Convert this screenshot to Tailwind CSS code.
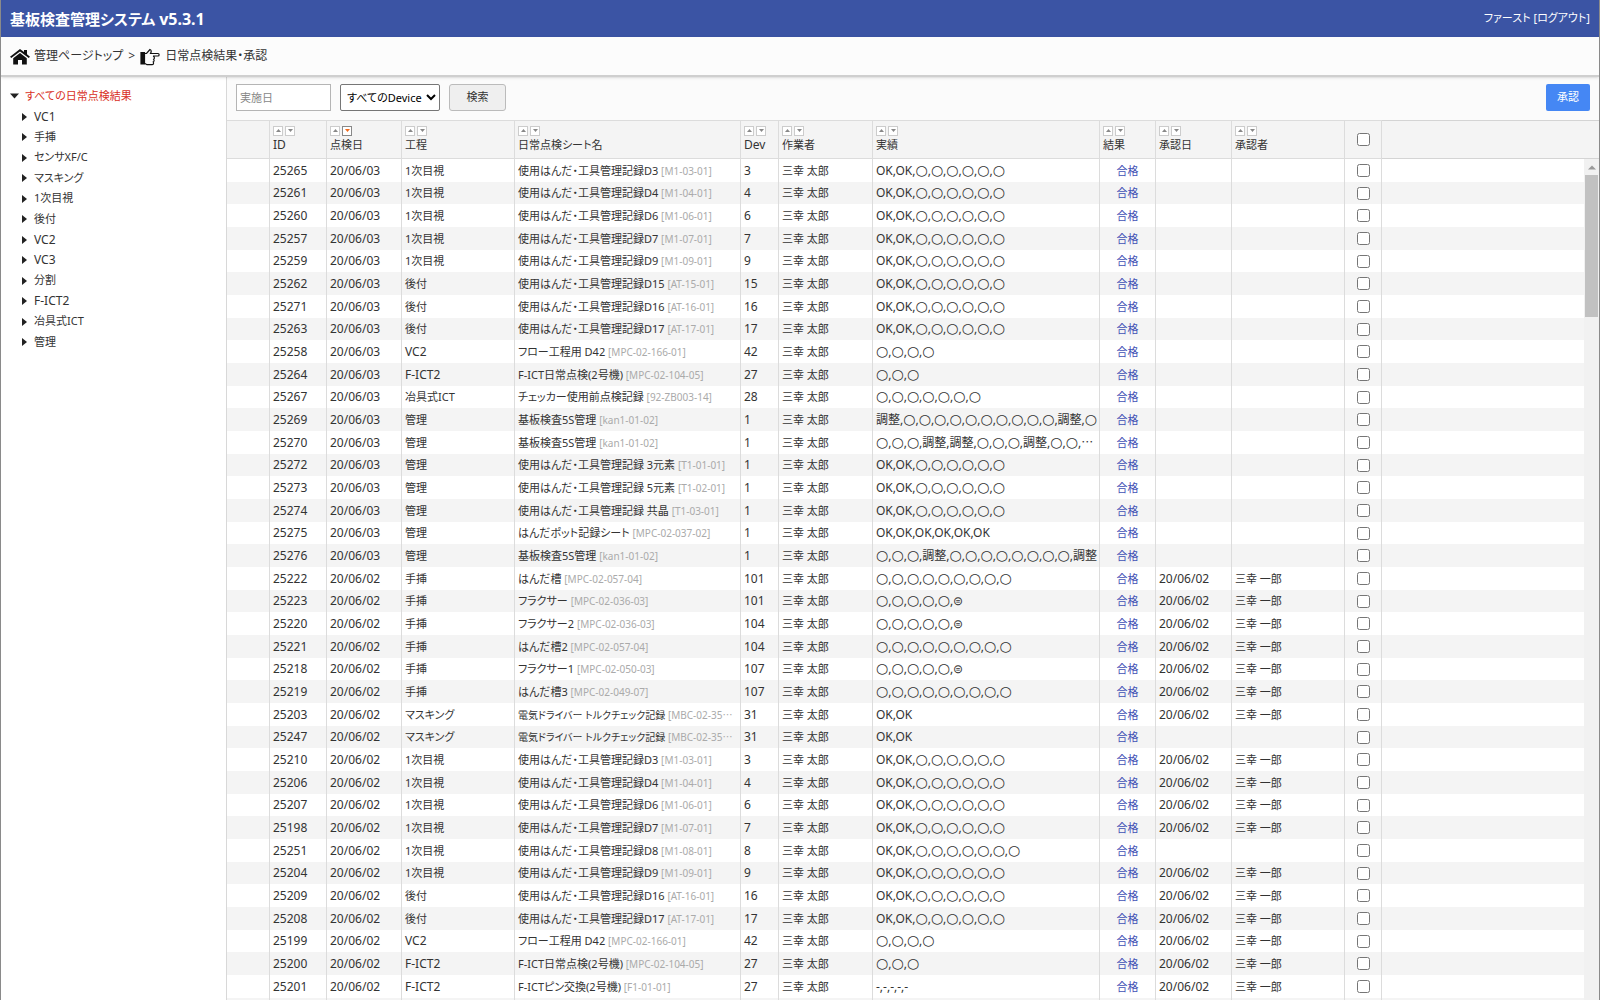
<!DOCTYPE html>
<html lang="ja">
<head>
<meta charset="utf-8">
<title>基板検査管理システム</title>
<script src="https://cdn.jsdelivr.net/npm/@tailwindcss/browser@4"></script>
</head>
<body class="font-['Noto_Sans','Noto_Sans_CJK_JP',sans-serif] text-[11px] text-[#333] [font-feature-settings:'palt']">
<div class="flex h-screen flex-col overflow-hidden border-x border-[#8a8a8a] bg-white">
  <header class="flex h-[37px] shrink-0 items-center justify-between bg-[#3b54a4] px-[9px] text-white">
    <h1 class="text-[15px] font-bold">基板検査管理システム <span class="text-base">v5.3.1</span></h1>
    <p class="text-[11px]">ファースト <a href="#">[ログアウト]</a></p>
  </header>
  <nav class="relative z-10 flex h-10 shrink-0 items-center border-b-2 border-[#cfcfcf] bg-[#fcfcfc] px-[9px] text-xs shadow-sm">
    <svg class="mt-0.5 mr-1 h-4 w-5" viewBox="0 0 20 18" preserveAspectRatio="none" fill="#111"><path d="M10 0 0 8.600l1.300 1.500L10 2.800l8.700 7.300L20 8.600 17 6V1h-3v2.500z"/><path d="M10 4.600 3.200 10.300V17.500H8V12.500h4v5h4.800V10.300z"/></svg>
    <a href="#">管理ページトップ</a>
    <span class="mx-[5px]">&gt;</span>
    <svg class="mt-0.5 mr-[5px] h-[18px] w-5" viewBox="0 0 20 18" fill="none" stroke="#111" stroke-width="1.200"><path d="M1 4.500h3.500v11.500H1z" fill="#111"/><path d="M5 5.500h1.500l3.500-4c1.500.3 1.500 2.200.5 4H18c1.500 0 1.500 2.500 0 2.500h-5M5 15.500l2 1.200h5c1.500 0 2-1.700 1.200-2.700 1-.5 1.200-1.900.5-2.700 1-.5 1-2.800-.7-3.300"/></svg>
    <a href="#">日常点検結果・承認</a>
  </nav>
  <div class="flex min-h-0 flex-1">
    <aside class="w-[226px] shrink-0 border-r border-[#d8d8d8] pt-2.5 pl-[9px]">
      <div class="flex h-[19px] items-center gap-1.5 text-[#d93025]"><svg class="size-[9px]" viewBox="0 0 9 9" fill="#222"><path d="M0 1.500h9L4.500 6.500z"/></svg><a href="#">すべての日常点検結果</a></div>
      <ul id="tree"></ul>
    </aside>
    <main class="flex min-w-0 flex-1 flex-col">
      <form class="flex h-[43px] shrink-0 items-center gap-[9px] bg-[#fbfbfb] px-[9px] pb-0.5">
        <input type="text" aria-label="実施日" placeholder="実施日" class="h-[27px] w-[95px] border border-[#b5b5b5] bg-white px-[3px] placeholder:text-[#888]">
        <select aria-label="Device" class="h-[27px] w-[100px] rounded-[2px] border border-[#767676] bg-white pl-[2px] text-[11px] text-black"><option>すべてのDevice</option></select>
        <button type="button" class="h-[27px] w-[57px] rounded-[3px] border border-[#bbb] bg-[#efefef]">検索</button>
        <button type="button" class="ml-auto h-[27px] w-11 rounded-[2px] bg-[#4587f4] text-white">承認</button>
      </form>
      <div class="relative min-h-0 flex-1 overflow-hidden">
        <table class="w-full table-fixed border-separate border-spacing-0">
          <colgroup><col class="w-[43px]"><col class="w-[57px]"><col class="w-[75px]"><col class="w-[113px]"><col class="w-[226px]"><col class="w-[38px]"><col class="w-[94px]"><col class="w-[227px]"><col class="w-[56px]"><col class="w-[76px]"><col class="w-[113px]"><col class="w-[37px]"><col></colgroup>
          <thead><tr id="head" class="h-[39px] bg-[#f4f4f4]"></tr></thead>
          <tbody id="rows"></tbody>
        </table>
        <div class="absolute top-[39px] right-0 bottom-0 w-[15px] bg-[#f1f1f1]">
          <svg class="mx-auto h-4 w-2" viewBox="0 0 8 16" fill="#999"><path d="M0 10.500h8L4 6.500z"/></svg>
          <div class="mx-[1px] h-[142px] bg-[#c1c1c1]"></div>
        </div>
      </div>
    </main>
  </div>
</div>
<script>
const tree = ['VC1','手挿','センサXF/C','マスキング','1次目視','後付','VC2','VC3','分割','F-ICT2','冶具式ICT','管理'];
const latin = s => /^[\x20-\x7e]+$/.test(s) ? 'text-xs' : 'text-[11px]';
document.getElementById('tree').innerHTML = tree.map(t =>
  `<li class="flex nth-[2n]:h-5 h-[21px] items-center gap-[7px] pl-3 ${latin(t)}"><svg class="h-2 w-[5px]" viewBox="0 0 5 8" fill="#222"><path d="M0 0v8l5-4z"/></svg><a href="#">${t}</a></li>`).join('');

const line = 'border-r border-[#dcdcdc] px-[3px]';
const arrow = (d, label, on) =>
  `<button type="button" aria-label="${label}" class="grid size-[10px] place-items-center border bg-white ${on ? 'border-[#888]' : 'border-[#ccc]'}"><svg class="h-[3px] w-[5px]" viewBox="0 0 5 3" fill="${on ? '#f26a1b' : '#888'}"><path d="${d}"/></svg></button>`;
const heads = ['ID','点検日','工程','日常点検シート名','Dev','作業者','実績','結果','承認日','承認者'];
document.getElementById('head').innerHTML =
  `<th class="border-y border-[#d4d4d4] ${line}"></th>` +
  heads.map(h => `<th class="border-y border-[#d4d4d4] ${line} text-left font-normal ${latin(h)}"><div class="flex gap-[2px]">${arrow('M0 3h5L2.500 0z', h + ' 昇順')}${arrow('M0 0h5L2.500 3z', h + ' 降順', h === '点検日')}</div><div class="h-[18px] leading-[18px]">${h}</div></th>`).join('') +
  `<th class="border-y border-[#d4d4d4] ${line}"><input type="checkbox" aria-label="すべて選択" class="mx-auto block size-[13px]"></th><th class="border-y border-[#d4d4d4]"></th>`;

const o = n => Array(n).fill('○').join(',');
const K = 'OK,OK,' + o(6), U = '使用はんだ・工具管理記録';
const A = '20/06/03', B = '20/06/02';
const data = [
  [25265,A,'1次目視',U+'D3','M1-03-01',3,K],
  [25261,A,'1次目視',U+'D4','M1-04-01',4,K],
  [25260,A,'1次目視',U+'D6','M1-06-01',6,K],
  [25257,A,'1次目視',U+'D7','M1-07-01',7,K],
  [25259,A,'1次目視',U+'D9','M1-09-01',9,K],
  [25262,A,'後付',U+'D15','AT-15-01',15,K],
  [25271,A,'後付',U+'D16','AT-16-01',16,K],
  [25263,A,'後付',U+'D17','AT-17-01',17,K],
  [25258,A,'VC2','フロー工程用 D42','MPC-02-166-01',42,o(4)],
  [25264,A,'F-ICT2','F-ICT日常点検(2号機)','MPC-02-104-05',27,o(3)],
  [25267,A,'冶具式ICT','チェッカー使用前点検記録','92-ZB003-14',28,o(7)],
  [25269,A,'管理','基板検査5S管理','kan1-01-02',1,'調整,'+o(10)+',調整,○'],
  [25270,A,'管理','基板検査5S管理','kan1-01-02',1,o(3)+',調整,調整,'+o(3)+',調整,'+o(2)+',⋯'],
  [25272,A,'管理',U+' 3元素','T1-01-01',1,K],
  [25273,A,'管理',U+' 5元素','T1-02-01',1,K],
  [25274,A,'管理',U+' 共晶','T1-03-01',1,K],
  [25275,A,'管理','はんだポット記録シート','MPC-02-037-02',1,'OK,OK,OK,OK,OK,OK'],
  [25276,A,'管理','基板検査5S管理','kan1-01-02',1,o(3)+',調整,'+o(8)+',調整'],
  [25222,B,'手挿','はんだ槽','MPC-02-057-04',101,o(9),1],
  [25223,B,'手挿','フラクサー','MPC-02-036-03',101,o(5)+',⊜',1],
  [25220,B,'手挿','フラクサー2','MPC-02-036-03',104,o(5)+',⊜',1],
  [25221,B,'手挿','はんだ槽2','MPC-02-057-04',104,o(9),1],
  [25218,B,'手挿','フラクサー1','MPC-02-050-03',107,o(5)+',⊜',1],
  [25219,B,'手挿','はんだ槽3','MPC-02-049-07',107,o(9),1],
  [25203,B,'マスキング','電気ドライバー トルクチェック記録','MBC-02-35⋯',31,'OK,OK',1],
  [25247,B,'マスキング','電気ドライバー トルクチェック記録','MBC-02-35⋯',31,'OK,OK'],
  [25210,B,'1次目視',U+'D3','M1-03-01',3,K,1],
  [25206,B,'1次目視',U+'D4','M1-04-01',4,K,1],
  [25207,B,'1次目視',U+'D6','M1-06-01',6,K,1],
  [25198,B,'1次目視',U+'D7','M1-07-01',7,K,1],
  [25251,B,'1次目視',U+'D8','M1-08-01',8,K+',○'],
  [25204,B,'1次目視',U+'D9','M1-09-01',9,K,1],
  [25209,B,'後付',U+'D16','AT-16-01',16,K,1],
  [25208,B,'後付',U+'D17','AT-17-01',17,K,1],
  [25199,B,'VC2','フロー工程用 D42','MPC-02-166-01',42,o(4),1],
  [25200,B,'F-ICT2','F-ICT日常点検(2号機)','MPC-02-104-05',27,o(3),1],
  [25201,B,'F-ICT2','F-ICTピン交換(2号機)','F1-01-01',27,'-,-,-,-,-',1],
];
// Circles come from DejaVu Sans, whose ring is small and firm.
const rings = s => s.replaceAll('○', `<span class="font-['DejaVu_Sans',sans-serif] text-sm leading-none">○</span>`);
const tr = 'h-[23px] nth-[3n+2]:h-[22px] even:bg-[#f4f4f4] whitespace-nowrap leading-4';
document.getElementById('rows').innerHTML = data.map(([id,day,proc,name,code,dev,res,ok]) =>
  `<tr class="${tr}"><td class="${line}"></td><td class="${line} text-xs">${id}</td><td class="${line} text-xs">${day}</td><td class="${line} ${latin(proc)}">${proc}</td>` +
  `<td class="${line} overflow-hidden ${name.length > 16 ? 'text-[10px]' : ''}">${name} <span class="text-[10px] text-[#aaa]">[${code}${code.endsWith('⋯') ? '' : ']'}</span></td>` +
  `<td class="${line} text-xs">${dev}</td><td class="${line}">三幸 太郎</td><td class="${line} overflow-hidden text-xs leading-4">${rings(res)}</td>` +
  `<td class="${line} text-center text-[#3f51b5]">合格</td><td class="${line} text-xs">${ok ? B : ''}</td><td class="${line}">${ok ? '三幸 一郎' : ''}</td>` +
  `<td class="${line}"><input type="checkbox" aria-label="${id}を選択" class="mx-auto block size-[13px]"></td><td></td></tr>`).join('') +
  `<tr class="${tr}">${`<td class="${line}"></td>`.repeat(12)}<td></td></tr>`;
</script>
</body>
</html>
